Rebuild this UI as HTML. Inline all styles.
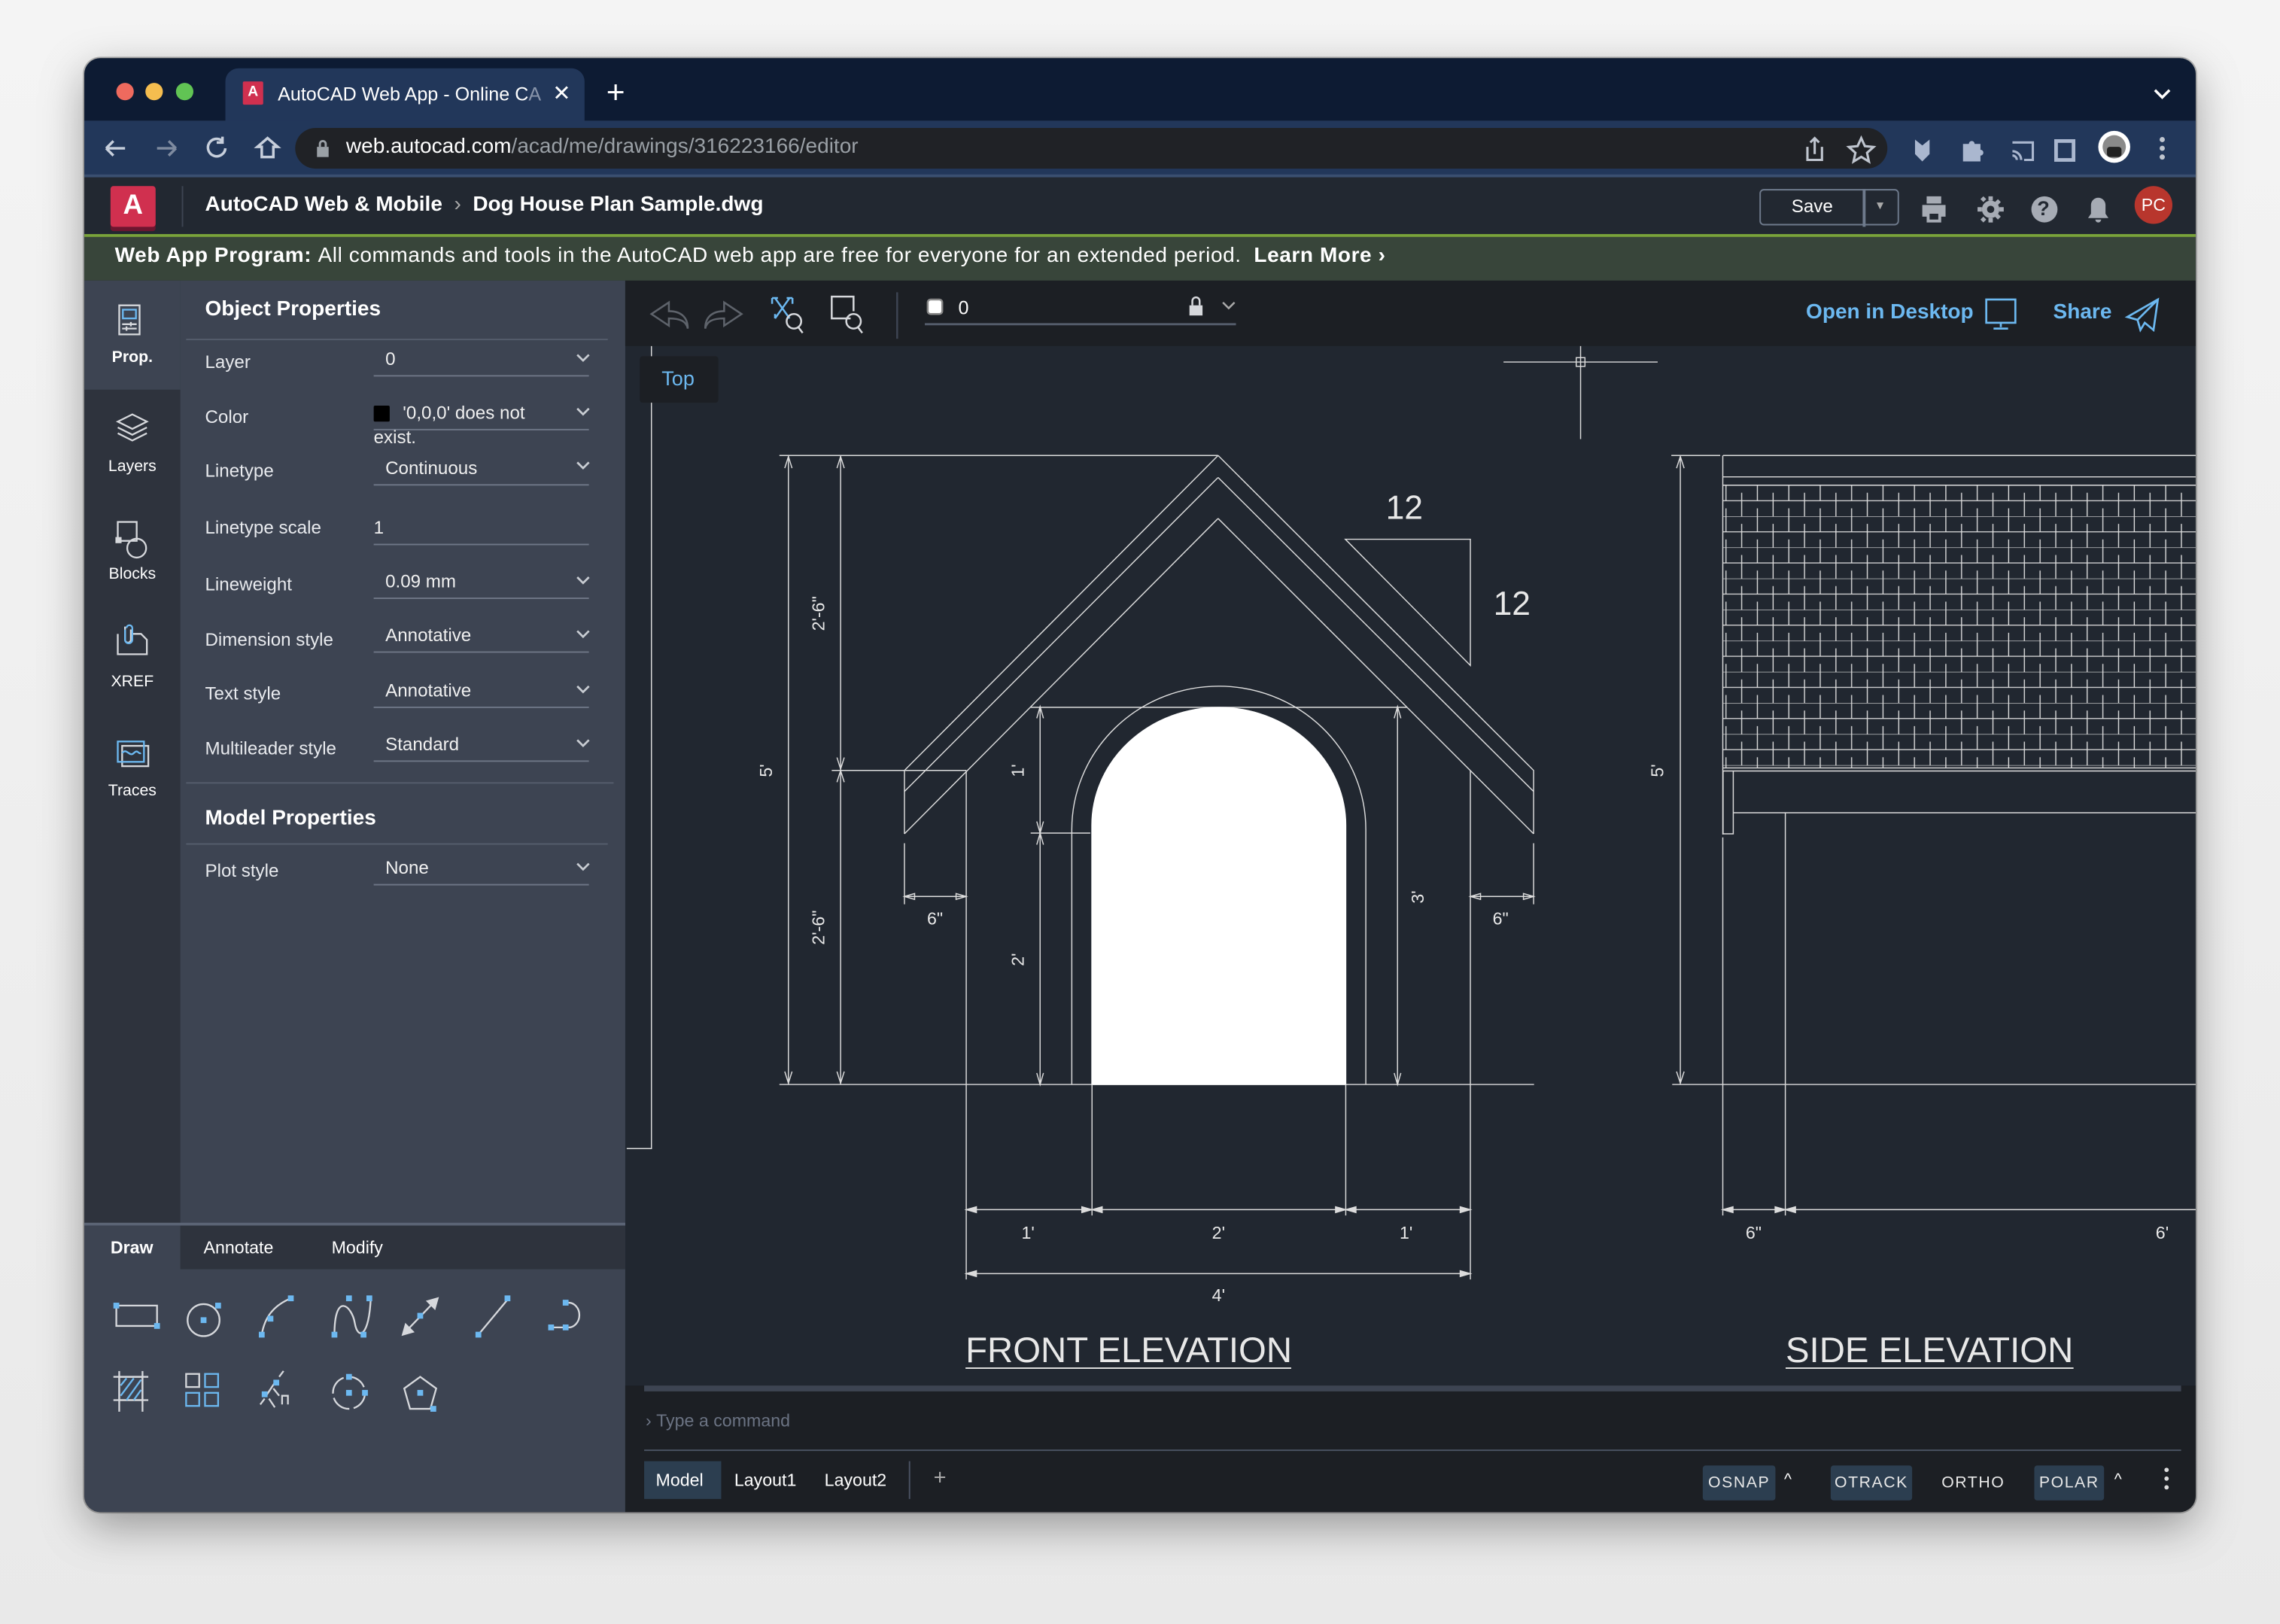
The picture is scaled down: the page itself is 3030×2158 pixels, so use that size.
<!DOCTYPE html>
<html><head><meta charset="utf-8">
<style>
html,body{margin:0;padding:0;width:3030px;height:2158px;overflow:hidden;background:#ececec;}
#w{position:absolute;left:0;top:0;width:1568px;height:1117px;transform:scale(1.93240,1.93196);transform-origin:0 0;font-family:"Liberation Sans",sans-serif;background:linear-gradient(#f4f4f4,#e9e9e9);}
.a{position:absolute;}
.t{position:absolute;white-space:nowrap;color:#fff;}
.win{left:58px;top:40px;width:1452px;height:1000px;border-radius:11px;overflow:hidden;box-shadow:0 10px 30px rgba(0,0,0,.35),0 0 0 1px rgba(0,0,0,.25);background:#212730;}
.lbl{position:absolute;left:141px;font-size:12.5px;color:#e8eaee;white-space:nowrap;}
.val{position:absolute;left:257px;width:148px;border-bottom:1.5px solid #6e7686;height:20px;font-size:12.5px;color:#f0f0f0;}
.val span{position:absolute;left:8px;top:2px;}
.rl{position:absolute;width:66px;text-align:center;font-size:11px;font-weight:bold;color:#fff;left:58px;}
.st{position:absolute;top:1008px;height:24px;font-size:11px;letter-spacing:.8px;color:#e8e8e8;line-height:24px;text-align:center;border-radius:2px;}
</style></head><body><div id="w">
<div class="a win">
 <div class="a" style="left:0;top:0;width:1452px;height:43px;background:#0d1b33"></div>
 <div class="a" style="left:22px;top:17px;width:12px;height:12px;border-radius:50%;background:#ee6a5e"></div>
 <div class="a" style="left:42px;top:17px;width:12px;height:12px;border-radius:50%;background:#f5bd4f"></div>
 <div class="a" style="left:63px;top:17px;width:12px;height:12px;border-radius:50%;background:#61c454"></div>
 <div class="a" style="left:97px;top:7px;width:247px;height:40px;background:#22375a;border-radius:9px 9px 0 0"></div>
 <div class="a" style="left:109px;top:16px;width:14px;height:16px;background:#d0304f;border-radius:1px;color:#fff;font-size:10px;font-weight:bold;text-align:center;line-height:15px">A</div>
 <div class="t" style="left:133px;top:17px;font-size:13px">AutoCAD Web App - Online C<span style="color:#8894aa">A</span></div>
 <div class="t" style="left:322px;top:15px;font-size:15px">✕</div>
 <div class="t" style="left:359px;top:11px;font-size:22px;font-weight:300">+</div>
 <svg class="a" style="left:1422px;top:20px" width="14" height="10"><path d="M2 2l5 5 5-5" stroke="#fff" stroke-width="1.8" fill="none"/></svg>
 <div class="a" style="left:0;top:43px;width:1452px;height:37px;background:#22375a;border-bottom:2px solid #3a4f70"></div>
 <svg class="a" style="left:12px;top:52px" width="150" height="20" fill="none" stroke="#c7cfdc" stroke-width="1.8">
  <path d="M3 10h13M3 10l5-5M3 10l5 5"/>
  <path d="M38 10h13M51 10l-5-5M51 10l-5 5" stroke="#7f8ba0"/>
  <path d="M83 5a6 6 0 1 0 2 5M83 2v4h-4"/>
  <path d="M110 16v-7h-3l7-6 7 6h-3v7z"/>
 </svg>
 <div class="a" style="left:145px;top:48px;width:1095px;height:28px;border-radius:14px;background:#202226"></div>
 <svg class="a" style="left:159px;top:55px" width="10" height="14"><rect x="1" y="6" width="8" height="7" fill="#9aa0a6"/><path d="M3 6V4a2 2 0 0 1 4 0v2" stroke="#9aa0a6" stroke-width="1.5" fill="none"/></svg>
 <div class="t" style="left:180px;top:53px;font-size:14.5px;color:#fff">web.autocad.com<span style="color:#9aa0a6">/acad/me/drawings/316223166/editor</span></div>
 <svg class="a" style="left:1180px;top:52px" width="240" height="22" fill="none" stroke="#bfc5cf" stroke-width="1.6">
  <path d="M5 9v9h10V9M10 3v11M7 6l3-3 3 3"/>
  <path d="M42 3l2.5 5.5 6 .6-4.5 4 1.3 6-5.3-3.2-5.3 3.2 1.3-6-4.5-4 6-.6z"/>
  <path d="M79 4l5 4 5-4v10l-5 5-5-5z" fill="#aab7cf" stroke="none"/>
  <path d="M112 7h4a2 2 0 0 1 4 0h4v4a2 2 0 0 1 0 4v4h-12z" fill="#aab7cf" stroke="none"/>
  <path d="M146 6h14v12h-6M146 12a6 6 0 0 1 6 6M146 15a3 3 0 0 1 3 3" stroke="#aab7cf"/>
  <rect x="176" y="5" width="12" height="13" stroke="#aab7cf" stroke-width="2.5"/>
 </svg>
 <div class="a" style="left:1385px;top:50px;width:22px;height:22px;border-radius:50%;background:#fff"></div>
 <div class="a" style="left:1388px;top:53px;width:16px;height:16px;border-radius:50%;background:#8a8a8a"></div>
 <div class="a" style="left:1391px;top:61px;width:10px;height:7px;border-radius:2px;background:#222"></div>
 <svg class="a" style="left:1424px;top:52px" width="10" height="20" fill="#bfc5cf"><circle cx="5" cy="4" r="1.8"/><circle cx="5" cy="10" r="1.8"/><circle cx="5" cy="16" r="1.8"/></svg>
 <div class="a" style="left:0;top:82px;width:1452px;height:39px;background:#222831"></div>
 <div class="a" style="left:18px;top:88px;width:31px;height:28px;background:#d0304f;border-radius:2px;box-shadow:0 3px 0 #6d1630"><div style="color:#fff;font-weight:bold;font-size:19px;text-align:center;line-height:27px">A</div></div>
 <div class="a" style="left:67px;top:88px;width:1px;height:28px;background:#3d4452"></div>
 <div class="t" style="left:83px;top:93px;font-size:14.5px;font-weight:bold">AutoCAD Web &amp; Mobile <span style="font-weight:normal;color:#aaa;margin:0 4px">›</span> Dog House Plan Sample.dwg</div>
 <div class="a" style="left:1152px;top:90px;width:94px;height:23px;border:1.5px solid #6e7a8c;border-radius:3px"></div>
 <div class="a" style="left:1223px;top:90px;width:1.5px;height:26px;background:#6e7a8c"></div>
 <div class="t" style="left:1174px;top:95px;font-size:12.5px">Save</div>
 <div class="t" style="left:1231px;top:97px;font-size:8px;color:#aaa">▼</div>
 <svg class="a" style="left:1262px;top:92px" width="200" height="26" fill="#a6abb4">
  <path d="M5 3h10v5H5zM2 9h16v8h-3v4H5v-4H2z"/><rect x="7" y="15" width="6" height="4" fill="#222831"/>
  <circle cx="49" cy="12" r="6"/><path d="M47.5 3h3v3h-3zM47.5 18h3v3h-3zM40 10.5h3v3h-3zM55 10.5h3v3h-3zM42 5l2-2 2 2-2 2zM52 17l2-2 2 2-2 2zM42 19l2 2 2-2-2-2zM52 7l2 2 2-2-2-2z"/><circle cx="49" cy="12" r="2.5" fill="#222831"/>
  <circle cx="86" cy="12" r="9"/>
  <path d="M123 4a5 5 0 0 1 5 5v6l2 3h-14l2-3V9a5 5 0 0 1 5-5zM121 19h4a2 2 0 0 1-4 0z"/>
 </svg>
 <div class="t" style="left:1343px;top:95px;font-size:14px;font-weight:bold;color:#222831">?</div>
 <div class="a" style="left:1410px;top:88px;width:26px;height:26px;border-radius:50%;background:#b8362d;color:#fff;font-size:12px;text-align:center;line-height:26px">PC</div>
 <div class="a" style="left:0;top:121px;width:1452px;height:2px;background:#7aa33a"></div>
 <div class="a" style="left:0;top:123px;width:1452px;height:30px;background:#38453a"></div>
 <div class="t" style="left:21px;top:128px;font-size:14.5px;font-weight:bold;letter-spacing:.3px">Web App Program: <span style="font-weight:normal">All commands and tools in the AutoCAD web app are free for everyone for an extended period.</span>&nbsp; Learn More ›</div>
 <div class="a" style="left:0;top:153px;width:66px;height:650px;background:#2e333d"></div>
 <div class="a" style="left:0;top:153px;width:66px;height:75px;background:#3d4452"></div>
 <div class="a" style="left:66px;top:153px;width:306px;height:650px;background:#3d4452"></div>
</div>
<svg class="a" style="left:70px;top:205px" width="45" height="340" fill="none" stroke="#d6d8dc" stroke-width="1.2">
 <rect x="12" y="5" width="14" height="20"/><rect x="14.5" y="8" width="9" height="6" stroke="#6cb8f0"/><path d="M14 18h10M14 21h10M20 16.5v3M17 19.5v3"/>
 <path d="M21 80l10 5-10 5-10-5zM11 89l10 5 10-5M11 93l10 5 10-5"/>
 <rect x="11" y="154" width="13" height="13"/><circle cx="24" cy="172" r="6.5"/><rect x="10" y="165" width="3" height="3" fill="#d6d8dc"/>
 <path d="M11 231v14h20v-10l-4-4h-7M16 226v9a2 2 0 0 0 4 0v-7" /><path d="M16 228v7a2.5 2.5 0 0 0 5 0v-8a2 2 0 0 0-4 0" stroke="#6cb8f0"/>
 <rect x="14" y="308" width="18" height="14"/><rect x="11" y="305" width="18" height="14" stroke="#6cb8f0"/><path d="M14 313c3-4 5 3 8 0s3 1 5 0" stroke="#6cb8f0"/>
</svg>
<div class="rl" style="top:240px">Prop.</div>
<div class="rl" style="top:315px;font-weight:normal">Layers</div>
<div class="rl" style="top:389px;font-weight:normal">Blocks</div>
<div class="rl" style="top:463px;font-weight:normal">XREF</div>
<div class="rl" style="top:538px;font-weight:normal">Traces</div>
<div class="t" style="left:141px;top:205px;font-size:14.5px;font-weight:bold">Object Properties</div>
<div class="a" style="left:128px;top:233px;width:290px;height:1px;background:#555d6c"></div>
<div class="lbl" style="top:242px">Layer</div>
<div class="val" style="top:238px"><span>0</span></div>
<div class="lbl" style="top:280px">Color</div>
<div class="val" style="top:275px"><div class="a" style="left:0;top:4px;width:11px;height:11px;background:#000;border-radius:1px"></div><span style="left:20px">'0,0,0' does not</span></div>
<div class="t" style="left:257px;top:294px;font-size:12.5px;color:#eee">exist.</div>
<div class="lbl" style="top:317px">Linetype</div>
<div class="val" style="top:313px"><span>Continuous</span></div>
<div class="lbl" style="top:356px">Linetype scale</div>
<div class="val" style="top:354px"><span style="left:0">1</span></div>
<div class="lbl" style="top:395px">Lineweight</div>
<div class="val" style="top:391px"><span>0.09 mm</span></div>
<div class="lbl" style="top:433px">Dimension style</div>
<div class="val" style="top:428px"><span>Annotative</span></div>
<div class="lbl" style="top:470px">Text style</div>
<div class="val" style="top:466px"><span>Annotative</span></div>
<div class="lbl" style="top:508px">Multileader style</div>
<div class="val" style="top:503px"><span>Standard</span></div>
<div class="a" style="left:128px;top:538px;width:294px;height:1px;background:#555d6c"></div>
<div class="t" style="left:141px;top:555px;font-size:14.5px;font-weight:bold">Model Properties</div>
<div class="a" style="left:128px;top:580px;width:290px;height:1px;background:#555d6c"></div>
<div class="lbl" style="top:592px">Plot style</div>
<div class="val" style="top:588px"><span>None</span></div>
<svg class="a" style="left:395px;top:240px" width="12" height="370" fill="none" stroke="#c8ccd2" stroke-width="1.4">
 <path d="M2 4l4 4 4-4M2 41l4 4 4-4M2 78l4 4 4-4M2 157l4 4 4-4M2 194l4 4 4-4M2 232l4 4 4-4M2 269l4 4 4-4M2 354l4 4 4-4"/>
</svg>
<div class="a" style="left:58px;top:841px;width:372px;height:2px;background:#5b6475"></div>
<div class="a" style="left:58px;top:843px;width:372px;height:197px;background:#3d4452;border-radius:0 0 0 11px"></div>
<div class="a" style="left:124px;top:843px;width:306px;height:30px;background:#2e333d"></div>
<div class="t" style="left:76px;top:851px;font-size:12px;font-weight:bold">Draw</div>
<div class="t" style="left:140px;top:851px;font-size:12px">Annotate</div>
<div class="t" style="left:228px;top:851px;font-size:12px">Modify</div>
<svg class="a" style="left:70px;top:890px" width="340" height="90" fill="none" stroke="#d6d8dc" stroke-width="1.2">
 <path d="M10 8h28v14H10z"/><rect x="8" y="6" width="4" height="4" fill="#6cb8f0" stroke="none"/><rect x="36" y="20" width="4" height="4" fill="#6cb8f0" stroke="none"/>
 <ellipse cx="70" cy="18" rx="11" ry="11"/><rect x="68" y="16" width="4" height="4" fill="#6cb8f0" stroke="none"/><rect x="78" y="6" width="4" height="4" fill="#6cb8f0" stroke="none"/>
 <path d="M110 28c2-12 8-20 20-25"/><rect x="108" y="26" width="4" height="4" fill="#6cb8f0" stroke="none"/><rect x="114" y="15" width="4" height="4" fill="#6cb8f0" stroke="none"/><rect x="128" y="1" width="4" height="4" fill="#6cb8f0" stroke="none"/>
 <path d="M160 28c0-30 12-20 14-8s10 10 11-18"/><rect x="158" y="26" width="4" height="4" fill="#6cb8f0" stroke="none"/><rect x="168" y="1" width="4" height="4" fill="#6cb8f0" stroke="none"/><rect x="182" y="1" width="4" height="4" fill="#6cb8f0" stroke="none"/><rect x="178" y="26" width="4" height="4" fill="#6cb8f0" stroke="none"/>
 <path d="M208 27l22-23"/><path d="M207 28l2-7 5 5zM231 3l-2 7-5-5z" fill="#d6d8dc"/><rect x="217" y="13" width="4" height="4" fill="#6cb8f0" stroke="none"/>
 <path d="M259 28l20-24"/><rect x="257" y="26" width="4" height="4" fill="#6cb8f0" stroke="none"/><rect x="277" y="1" width="4" height="4" fill="#6cb8f0" stroke="none"/>
 <path d="M310 23h8M321 6a7 8 0 0 1 0 17"/><rect x="307" y="21" width="4" height="4" fill="#6cb8f0" stroke="none"/><rect x="317" y="21" width="4" height="4" fill="#6cb8f0" stroke="none"/><rect x="317" y="4" width="4" height="4" fill="#6cb8f0" stroke="none"/>
 <path d="M8 57h24M8 73h24M12 53v28M28 53v28"/><rect x="12" y="57" width="16" height="16"/><path d="M13 70l9-12M17 73l10-14M13 63l4-5M22 73l5-7" stroke="#6cb8f0"/>
 <rect x="58" y="55" width="9" height="9"/><rect x="71" y="55" width="9" height="9" stroke="#6cb8f0"/><rect x="58" y="68" width="9" height="9" stroke="#6cb8f0"/><rect x="71" y="68" width="9" height="9" stroke="#6cb8f0"/>
 <path d="M109 76l3-4M113 70l6-9M122 57l3-4M115 72l4 6M118 65l4 5M124 76v-6h4v6"/><rect x="110" y="67" width="4" height="4" fill="#6cb8f0" stroke="none"/><rect x="118" y="59" width="4" height="4" fill="#6cb8f0" stroke="none"/>
 <circle cx="170" cy="68" r="11" stroke-dasharray="14 3"/><rect x="168" y="66" width="4" height="4" fill="#6cb8f0" stroke="none"/><rect x="168" y="55" width="4" height="4" fill="#6cb8f0" stroke="none"/><rect x="179" y="66" width="4" height="4" fill="#6cb8f0" stroke="none"/>
 <path d="M219 57l11 8-4 14h-14l-4-14z"/><rect x="217" y="66" width="4" height="4" fill="#6cb8f0" stroke="none"/><rect x="226" y="77" width="4" height="4" fill="#6cb8f0" stroke="none"/>
</svg>
<div class="a" style="left:430px;top:193px;width:1080px;height:45px;background:#1c1f24"></div>
<svg class="a" style="left:440px;top:198px" width="430" height="36" fill="none" stroke-width="1.3">
 <path d="M20 10l-12 8 12 8v-5c8 0 12 2 13 7 0-8-5-12-13-12z" stroke="#5e636b"/>
 <path d="M58 10l12 8-12 8v-5c-8 0-12 2-13 7 0-8 5-12 13-12z" stroke="#5e636b"/>
 <path d="M93 7l10 14M103 7l-10 14M91 7h4M91 7v4M105 7h-4M105 7v4M93 21v-3" stroke="#6cb8f0"/>
 <circle cx="106" cy="23" r="5" stroke="#d6d8dc"/><path d="M109 27l3 4" stroke="#d6d8dc"/>
 <path d="M145 21h-13V6h15v10" stroke="#d6d8dc"/><circle cx="147" cy="23" r="5" stroke="#d6d8dc"/><path d="M150 27l3 4" stroke="#d6d8dc"/>
 <path d="M177 3v32" stroke="#3d4452"/>
 <rect x="198" y="8" width="10" height="10" rx="2" fill="#fff" stroke="#888"/>
 <path d="M196 25h214" stroke="#555d6c" stroke-width="1.5"/>
 <rect x="378" y="12" width="9" height="7" fill="#d6d8dc" stroke="none"/><path d="M380 12v-3a2.5 2.5 0 0 1 5 0v3" stroke="#d6d8dc"/>
 <path d="M401 10l4 4 4-4" stroke="#aaa"/>
</svg>
<div class="t" style="left:659px;top:204px;font-size:13px">0</div>
<div class="t" style="left:1242px;top:207px;font-size:14.5px;font-weight:bold;color:#6cb8f0">Open in Desktop</div>
<div class="t" style="left:1412px;top:207px;font-size:14.5px;font-weight:bold;color:#6cb8f0">Share</div>
<svg class="a" style="left:1362px;top:203px" width="126" height="26" fill="none" stroke="#6cb8f0" stroke-width="1.4">
 <rect x="4" y="3" width="20" height="16"/><path d="M14 19v3M9 23h10"/>
 <path d="M122 3l-21 12 7 2 2 7 3-5 6 5zM108 17l14-14"/>
</svg>
<svg class="a" style="left:0;top:0" width="1568" height="1117" fill="none" stroke="#dcdcdc" stroke-width="0.75">
 <defs>
  <pattern id="br" x="1185" y="333.7" width="21.6" height="21.4" patternUnits="userSpaceOnUse">
   <path d="M0 0h21.6M0 10.7h21.6M2 0v10.7M12.8 5.2v5.5M12.8 10.7v10.7M2 15.9v5.5" stroke="#e0e0e0" stroke-width="0.7"/>
  </pattern>
  <clipPath id="cv"><rect x="430" y="238" width="1080" height="717"/></clipPath>
 </defs>
 <g clip-path="url(#cv)">
 <path d="M448 238v552h-17"/>
 <path d="M1034 249h106M1087 238v64"/><rect x="1084" y="246" width="6" height="6"/>
 <path d="M536 313.3h301.7M536 745.9h519"/>
 <path d="M542.2 313.3v432.6M578.1 313.3v432.6M572 529.9h92.5"/>
 <path d="M539.7 322l2.5-8 2.5 8M539.7 737l2.5 8 2.5-8M575.6 322l2.5-8 2.5 8M575.6 737l2.5 8 2.5-8M575.6 521l2.5 8 2.5-8M575.6 538l2.5-8 2.5 8"/>
 <path d="M837.7 313.3L622 529.9v43.6M837.7 328.4L622 544.4M837.7 356.6L622 573.5"/>
 <path d="M837.7 313.3L1054.7 529.9v43.6M837.7 328.4L1054.7 544.4M837.7 356.6L1054.7 573.5"/>
 <path d="M664.5 529.9V880M1011.2 529.9V880M622 580v42M1054.7 580v42"/>
 <path d="M622 616.6h42.5M1011.2 616.6h43.5M622 616.6l7-2v4zM664.5 616.6l-7-2v4zM1011.2 616.6l7-2v4zM1054.7 616.6l-7-2v4z"/>
 <path d="M708.8 486.5h258.8"/>
 <path d="M737.1 745.9V570.5A101 98.5 0 0 1 939.3 570.5V745.9"/>
 <path d="M750.9 745.9V567.6A87.3 81 0 0 1 925.5 567.6V745.9z" fill="#fff" stroke="#fff"/>
 <path d="M715.3 486.5v259.4M708.8 573h41M713 494l2.3-8 2.3 8M713 565l2.3 8 2.3-8M713 581l2.3-8 2.3 8M713 738l2.3 8 2.3-8"/>
 <path d="M961.1 486.5v259.4M958.8 494l2.3-8 2.3 8M958.8 738l2.3 8 2.3-8"/>
 <path d="M925.2 370.9h86v86.8z"/>
 <path d="M751 746v90M925.5 746v90M664.5 832h346.7M664.5 876h346.7"/>
 <path d="M664.5 832l7-2v4zM751 832l-7-2v4zM751 832l7-2v4zM925.5 832l-7-2v4zM925.5 832l7-2v4zM1011.2 832l-7-2v4zM664.5 876l7-2v4zM1011.2 876l-7-2v4z" fill="#dcdcdc"/>
 <path d="M664 941h224M1228 941h198" stroke-width="1"/>
 <path d="M1149.4 313.3h33.6M1185 313.3h330M1155.6 313.3v432.6M1153 322l2.6-8 2.6 8M1153 737l2.6 8 2.6-8"/>
 <path d="M1184.8 313.3V574M1185 328h330M1150 745.9h365"/>
 <rect x="1185" y="333.7" width="330" height="194.5" fill="url(#br)" stroke="none"/>
 <path d="M1185 528.2h330M1185 530.3h330M1185 333.7h330"/>
 <path d="M1185 530v43.5h7V530M1192 559h323M1227.8 559v277M1184.8 576V836M1184.8 832h43M1228 832h290"/>
 <path d="M1184.8 832l7-2v4zM1227.8 832l-7-2v4zM1227.8 832l7-2v4z" fill="#dcdcdc"/>
 </g>
 <g fill="#e8e8e8" stroke="none" font-family="Liberation Sans, sans-serif" font-size="12">
  <text x="953" y="357" font-size="23">12</text>
  <text x="1027" y="423" font-size="23">12</text>
  <text transform="translate(531 530) rotate(-90)" text-anchor="middle">5'</text>
  <text transform="translate(567 422) rotate(-90)" text-anchor="middle">2'-6"</text>
  <text transform="translate(567 638) rotate(-90)" text-anchor="middle">2'-6"</text>
  <text transform="translate(704 530) rotate(-90)" text-anchor="middle">1'</text>
  <text transform="translate(704 660) rotate(-90)" text-anchor="middle">2'</text>
  <text transform="translate(979 617) rotate(-90)" text-anchor="middle">3'</text>
  <text transform="translate(1144 530) rotate(-90)" text-anchor="middle">5'</text>
  <text x="643" y="636" text-anchor="middle">6"</text>
  <text x="1032" y="636" text-anchor="middle">6"</text>
  <text x="707" y="852" text-anchor="middle">1'</text>
  <text x="838" y="852" text-anchor="middle">2'</text>
  <text x="967" y="852" text-anchor="middle">1'</text>
  <text x="838" y="895" text-anchor="middle">4'</text>
  <text x="1206" y="852" text-anchor="middle">6"</text>
  <text x="1487" y="852" text-anchor="middle">6'</text>
  <text x="664" y="937" font-size="24.5">FRONT ELEVATION</text>
  <text x="1228" y="937" font-size="24.5">SIDE ELEVATION</text>
 </g>
</svg>
<div class="a" style="left:440px;top:245px;width:54px;height:32px;background:#1c1f24;border-radius:2px"></div>
<div class="t" style="left:455px;top:252px;font-size:14px;color:#6cb8f0">Top</div>
<div class="a" style="left:430px;top:953px;width:1080px;height:87px;background:#1c1f24;border-radius:0 0 11px 0"></div>
<div class="a" style="left:443px;top:953px;width:1057px;height:4px;background:#3d4452"></div>
<div class="t" style="left:444px;top:970px;font-size:12px;color:#6b7383">›&nbsp;Type a command</div>
<div class="a" style="left:443px;top:997px;width:1057px;height:1px;background:#4a5262"></div>
<div class="a" style="left:443px;top:1005px;width:53px;height:26px;background:#2c3e50"></div>
<div class="t" style="left:451px;top:1011px;font-size:12px">Model</div>
<div class="t" style="left:505px;top:1011px;font-size:12px">Layout1</div>
<div class="t" style="left:567px;top:1011px;font-size:12px">Layout2</div>
<div class="a" style="left:625px;top:1005px;width:1px;height:26px;background:#4a5262"></div>
<div class="t" style="left:642px;top:1008px;font-size:15px;color:#aaa">+</div>
<div class="st" style="left:1171px;width:50px;background:#2c3e50">OSNAP</div>
<div class="t" style="left:1227px;top:1012px;font-size:11px">^</div>
<div class="st" style="left:1259px;width:56px;background:#2c3e50">OTRACK</div>
<div class="st" style="left:1332px;width:50px">ORTHO</div>
<div class="st" style="left:1399px;width:48px;background:#2c3e50">POLAR</div>
<div class="t" style="left:1454px;top:1012px;font-size:11px">^</div>
<svg class="a" style="left:1485px;top:1008px" width="10" height="20" fill="#ddd"><circle cx="5" cy="3" r="1.5"/><circle cx="5" cy="9" r="1.5"/><circle cx="5" cy="15" r="1.5"/></svg>
</div></body></html>
